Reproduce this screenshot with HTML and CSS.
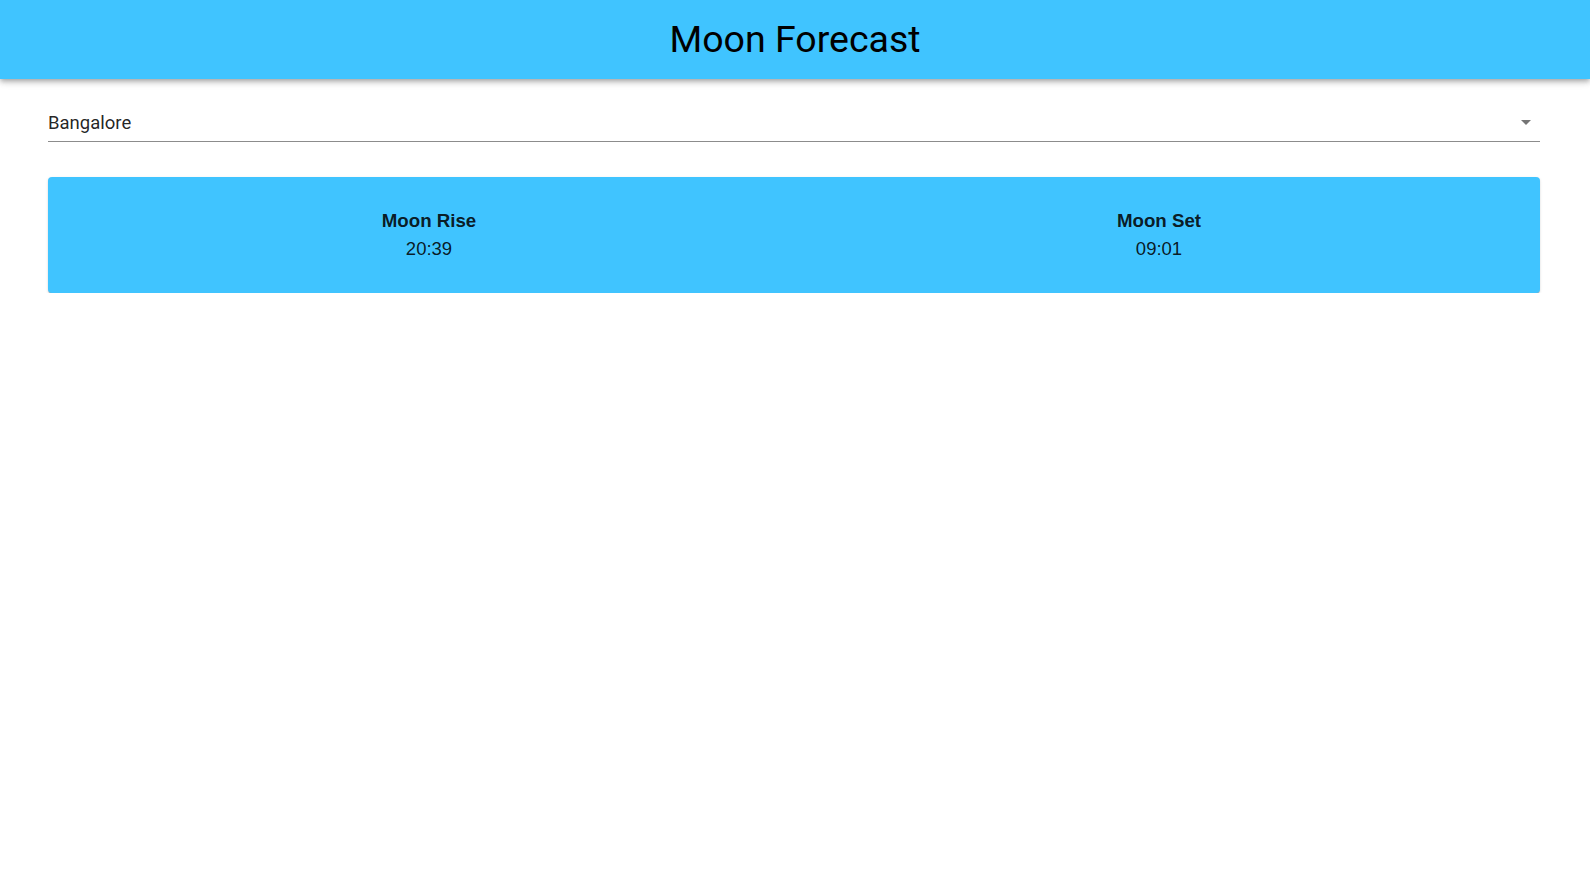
FILE: index.html
```html
<!DOCTYPE html>
<html lang="en">
<head>
<meta charset="utf-8">
<title>Moon Forecast</title>
<link rel="stylesheet" href="styles.css">
</head>
<body>
<header class="app-bar">
  <h1 class="app-title">Moon Forecast</h1>
</header>
<main class="content">
  <div class="select">
    <span class="select-value">Bangalore</span>
    <svg class="select-icon" viewBox="0 0 24 24" width="24" height="24" aria-hidden="true"><path d="M7 10l5 5 5-5z"/></svg>
  </div>
  <section class="card">
    <div class="card-col">
      <h3 class="card-title">Moon Rise</h3>
      <p class="card-value">20:39</p>
    </div>
    <div class="card-col">
      <h3 class="card-title">Moon Set</h3>
      <p class="card-value">09:01</p>
    </div>
  </section>
</main>
</body>
</html>
```

FILE: styles.css
```css
html, body {
  margin: 0;
  padding: 0;
  background: #ffffff;
}

body {
  font-family: Roboto, "Liberation Sans", Arial, sans-serif;
}

.app-bar {
  background: #40c4ff;
  height: 79px;
  box-sizing: border-box;
  padding-top: 18px;
  box-shadow: 0 2px 4px -1px rgba(0,0,0,0.2), 0 4px 5px 0 rgba(0,0,0,0.14), 0 1px 10px 0 rgba(0,0,0,0.12);
  position: relative;
  z-index: 1;
}

.app-title {
  margin: 0;
  text-align: center;
  font-family: Roboto, sans-serif;
  font-weight: 400;
  font-size: 37.5px;
  line-height: 42px;
  color: #000000;
}

.content {
  padding: 26px 50px 0 48px;
}

.select {
  display: flex;
  align-items: center;
  padding: 6px 0;
  border-bottom: 1px solid rgba(0,0,0,0.45);
}

.select-value {
  flex: 1;
  font-family: Roboto, sans-serif;
  font-size: 18.5px;
  line-height: 24px;
  color: rgba(0,0,0,0.87);
}

.select-icon {
  fill: rgba(0,0,0,0.54);
  margin-right: 2px;
  margin-top: -2px;
}

.card {
  margin-top: 35px;
  background: #40c4ff;
  border-radius: 4px;
  padding: 31px 16px;
  display: grid;
  grid-template-columns: 1fr 1fr;
  box-shadow: 0 2px 1px -1px rgba(0,0,0,0.2), 0 1px 1px 0 rgba(0,0,0,0.14), 0 1px 3px 0 rgba(0,0,0,0.12);
}

.card-col {
  text-align: center;
  font-family: "Liberation Sans", Arial, sans-serif;
  color: rgba(0,0,0,0.87);
}

.card-title {
  margin: 0;
  font-size: 18.72px;
  font-weight: 700;
  line-height: 25px;
}

.card-value {
  margin: 3px 0 0;
  font-size: 18.5px;
  line-height: 25px;
  padding-bottom: 1px;
}
```
